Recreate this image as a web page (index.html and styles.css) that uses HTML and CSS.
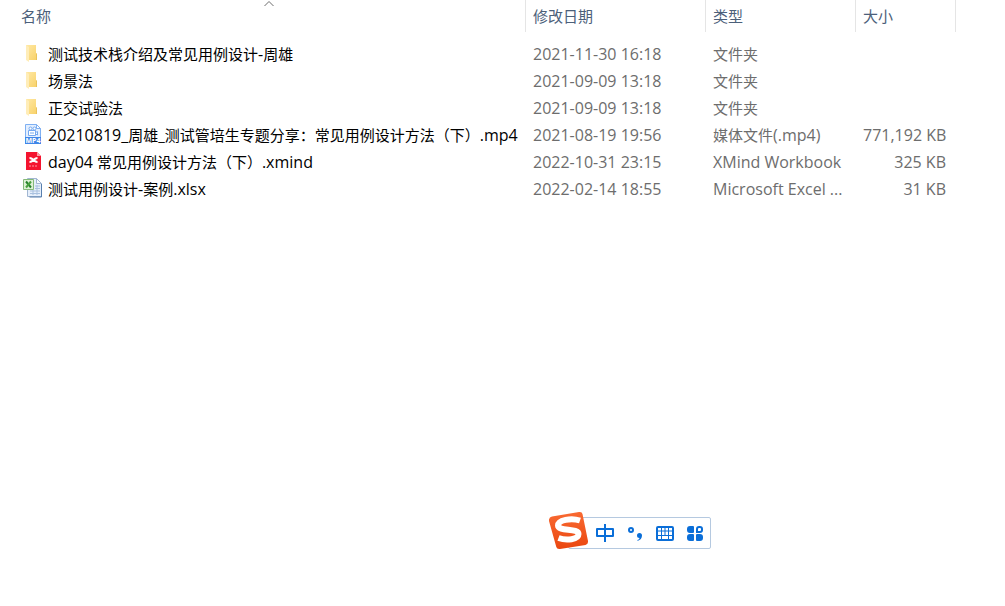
FILE: index.html
```
<!DOCTYPE html>
<html lang="zh-CN">

<head>
    <meta charset="utf-8" />
    <title>测试用例设计</title>
    <link rel="stylesheet" href="styles.css">
</head>

<body>
    <!-- shared icon shapes -->
    <svg class="sprite" width="0" height="0" aria-hidden="true">
        <defs>
            <linearGradient id="folder-front" x1="0" y1="0" x2="1" y2="1">
                <stop offset="0" stop-color="#ffe9a6" />
                <stop offset="1" stop-color="#f8d168" />
            </linearGradient>
            <linearGradient id="sogou-orange" x1="0" y1="0" x2="0" y2="1">
                <stop offset="0" stop-color="#f96a32" />
                <stop offset="1" stop-color="#ea4710" />
            </linearGradient>
        </defs>
        <symbol id="folder" viewBox="0 0 20 20">
            <path d="M3 2h10v8l1 1v6H3z" fill="url(#folder-front)" />
            <path d="M13 10l1 1v6h-1z" fill="#e9c35c" />
            <path d="M3 2l3 2v15l-3-2z" fill="#ffedb8" />
        </symbol>
    </svg>

    <main class="file-list">
        <table>
            <thead>
                <tr>
                    <th class="name">
                        <svg class="sort-arrow" width="10" height="6" viewBox="0 0 10 6"><path d="M.5 5l4.500-4.500 4.500 4.500" fill="none" stroke="#6d6d6d" /></svg>
                        <button type="button">名称</button>
                    </th>
                    <th class="date"><button type="button">修改日期</button></th>
                    <th class="type"><button type="button">类型</button></th>
                    <th class="size"><button type="button">大小</button></th>
                </tr>
            </thead>
            <tbody>
                <tr>
                    <td class="name"><div class="file"><svg class="icon"><use href="#folder" /></svg><span>测试技术栈介绍及常见用例设计<span class="latin">-</span>周雄</span></div></td>
                    <td class="date">2021-11-30 16:18</td>
                    <td class="type">文件夹</td>
                    <td class="size"></td>
                </tr>
                <tr>
                    <td class="name"><div class="file"><svg class="icon"><use href="#folder" /></svg><span>场景法</span></div></td>
                    <td class="date">2021-09-09 13:18</td>
                    <td class="type">文件夹</td>
                    <td class="size"></td>
                </tr>
                <tr>
                    <td class="name"><div class="file"><svg class="icon"><use href="#folder" /></svg><span>正交试验法</span></div></td>
                    <td class="date">2021-09-09 13:18</td>
                    <td class="type">文件夹</td>
                    <td class="size"></td>
                </tr>
                <tr>
                    <td class="name">
                        <div class="file">
                            <svg class="icon" viewBox="0 0 20 20">
                                <path d="M2.500.5h11l4 4v15h-15z" fill="#e3efff" stroke="#7fb0f2" />
                                <path d="M13.500.5v4h4z" fill="#fff" stroke="#7fb0f2" />
                                <circle cx="7.500" cy="4.500" r="1.500" fill="#fff" stroke="#74a9f0" />
                                <circle cx="11.500" cy="4.500" r="1.500" fill="#fff" stroke="#74a9f0" />
                                <path d="M5.500 6.500h7v5h-7zM12.500 8.500l2-1v3.500l-2-1z" fill="#fff" stroke="#74a9f0" />
                                <path d="M7 9h4" stroke="#74a9f0" />
                                <path d="M2 13h16v7H2z" fill="#3f86e8" />
                                <text class="badge" x="10" y="19" text-anchor="middle">MP4</text>
                            </svg>
                            <span><span class="latin">20210819_</span>周雄_测试管培生专题分享：常见用例设计方法（下）<span class="latin">.mp4</span></span>
                        </div>
                    </td>
                    <td class="date">2021-08-19 19:56</td>
                    <td class="type">媒体文件<span class="latin">(.mp4)</span></td>
                    <td class="size">771,192 KB</td>
                </tr>
                <tr>
                    <td class="name">
                        <div class="file">
                            <svg class="icon" viewBox="0 0 20 20">
                                <path d="M3 1h11l4 4v14H3z" fill="#f4142f" />
                                <path d="M14 1l4 4h-4z" fill="#ff9ba5" />
                                <path d="M6.500 7q2 0 4 2t4 2M14.500 7q-2 0-4 2t-4 2" fill="none" stroke="#fff" stroke-width="2" />
                                <path d="M6 15h9" stroke="#ff96a1" stroke-dasharray="2 1" />
                            </svg>
                            <span><span class="latin">day04</span> 常见用例设计方法（下）<span class="latin">.xmind</span></span>
                        </div>
                    </td>
                    <td class="date">2022-10-31 23:15</td>
                    <td class="type"><span class="latin">XMind Workbook</span></td>
                    <td class="size">325 KB</td>
                </tr>
                <tr>
                    <td class="name">
                        <div class="file">
                            <svg class="icon" viewBox="0 0 20 20">
                                <path d="M4.500.5h9l5 5v13h-14z" fill="#e6effb" stroke="#a2b7d2" />
                                <path d="M13.500.5v5h5z" fill="#f7fbff" stroke="#a2b7d2" />
                                <path d="M12 8h5M12 10.500h5M7 13h10M7 15.500h10M10 12v5M14 7v10" stroke="#a9c1df" />
                                <path d="M18.500 6v13h-12" fill="none" stroke="#587fae" />
                                <path d="M.5 1.500h10v10H.5z" fill="#dff1d6" stroke="#85b97a" />
                                <path d="M3 3.500l5 6" stroke="#26802c" stroke-width="2" />
                                <path d="M8 3.500l-5 6" stroke="#4aa13f" stroke-width="2" />
                            </svg>
                            <span>测试用例设计<span class="latin">-</span>案例<span class="latin">.xlsx</span></span>
                        </div>
                    </td>
                    <td class="date">2022-02-14 18:55</td>
                    <td class="type"><span class="latin">Microsoft Excel ...</span></td>
                    <td class="size">31 KB</td>
                </tr>
            </tbody>
        </table>
    </main>

    <!-- floating input method bar -->
    <div class="ime-bar">
        <svg class="ime-logo" width="40" height="40" viewBox="0 0 40 40">
            <path d="M3 5.500L30 1q3-.5 3.500 2L39 30q.5 3-2.500 4L11 38q-3 .5-3.700-2L0 10q-.5-3.500 3-4.500z" fill="url(#sogou-orange)" />
            <path d="M31 9.500C22 6.500 9 9 9 14.500c0 6 20.500 2.500 20.500 8.500 0 5.500-12 7-20 4" fill="none" stroke="#fff" stroke-width="6" />
        </svg>
        <button type="button" aria-label="中文">
            <svg width="20" height="20" viewBox="0 0 20 20"><path d="M2 6h16v7H2zM10 1v18" fill="none" stroke="#0a6ed8" stroke-width="2" stroke-linejoin="round" /></svg>
        </button>
        <button type="button" aria-label="标点">
            <svg width="20" height="20" viewBox="0 0 20 20">
                <circle cx="6" cy="7" r="2" fill="none" stroke="#0a6ed8" stroke-width="2" />
                <path d="M12 12.500a2.500 2.500 0 1 1 5 0q0 4-4.500 5.500v-1q2-.5 2-2-2.500 0-2.500-2.500z" fill="#0a6ed8" />
            </svg>
        </button>
        <button type="button" aria-label="软键盘">
            <svg width="20" height="20" viewBox="0 0 20 20">
                <rect x="2" y="4" width="16" height="13" rx="1" fill="#fff" stroke="#0a6ed8" stroke-width="2" />
                <path d="M2 8h16M2 12.500h16M6.500 4v13M10 4v8.500M13.500 4v13" stroke="#0a6ed8" />
            </svg>
        </button>
        <button type="button" aria-label="工具箱">
            <svg width="20" height="20" viewBox="0 0 20 20" fill="#0a6ed8">
                <path d="M5 3h3q1 0 1 1v5q0 1-1 1H5q-3 0-3-3V6q0-3 3-3zM5 11h3q1 0 1 1v5q0 1-1 1H5q-3 0-3-3v-1q0-3 3-3zM12 11h3q3 0 3 3v1q0 3-3 3h-3q-1 0-1-1v-5q0-1 1-1z" />
                <path d="M12 9V6q0-2 2-2h1q2 0 2 2v1q0 2-2 2z" fill="#fff" stroke="#0a6ed8" stroke-width="2" />
            </svg>
        </button>
    </div>
</body>

</html>
```

FILE: styles.css
```
body {
    margin: 0;
    background-color: #fff;
    color: #000;
    font-family: "Open Sans", "Noto Sans CJK SC", sans-serif;
    font-size: 15px;
    line-height: 27px;
}

button {
    padding: 0;
    border: none;
    background: none;
    color: inherit;
    font: inherit;
    cursor: pointer;
}

.sprite {
    position: absolute;
}

.file-list {
    padding: 0 49px 0 13px;
}

table {
    width: 100%;
    border-collapse: separate;
    border-spacing: 0;
    table-layout: fixed;
}

th {
    position: relative;
    height: 32px;
    box-sizing: border-box;
    padding: 0 7px;
    border-right: 1px solid #e5e5e5;
    color: #4c607a;
    font-weight: normal;
    text-align: left;
}

th.name {
    padding-left: 8px;
}

th.date {
    width: 180px;
}

th.type {
    width: 150px;
}

th.size {
    width: 100px;
}

.sort-arrow {
    position: absolute;
    top: 1px;
    left: 50%;
    margin-left: -5px;
}

/* space between the header and the first row */
tbody::before {
    content: "";
    display: block;
    height: 9px;
}

td {
    height: 27px;
    padding: 0 7px;
    color: #6d6d6d;
    white-space: nowrap;
}

td.name {
    padding: 0 0 0 10px;
    color: #000;
}

td.date,
td.size,
.latin {
    font-size: 16px;
}

.latin {
    line-height: 1;
}

td.size {
    padding-right: 10px;
    text-align: right;
}

.file {
    display: flex;
    align-items: center;
    gap: 5px;
}

.icon {
    width: 20px;
    height: 20px;
    margin-bottom: 3px;
    flex: none;
}

.badge {
    fill: #fff;
    font-size: 7px;
    font-weight: bold;
}

.ime-bar {
    position: fixed;
    left: 568px;
    top: 517px;
    display: flex;
    align-items: center;
    gap: 10px;
    padding: 5px 5px 5px 26px;
    border: 1px solid #b5c9e0;
    border-radius: 2px;
    background-color: #fff;
}

.ime-logo {
    position: absolute;
    left: -20px;
    top: -7px;
}

.ime-bar button,
.ime-bar button svg {
    display: block;
    width: 20px;
    height: 20px;
}
```
